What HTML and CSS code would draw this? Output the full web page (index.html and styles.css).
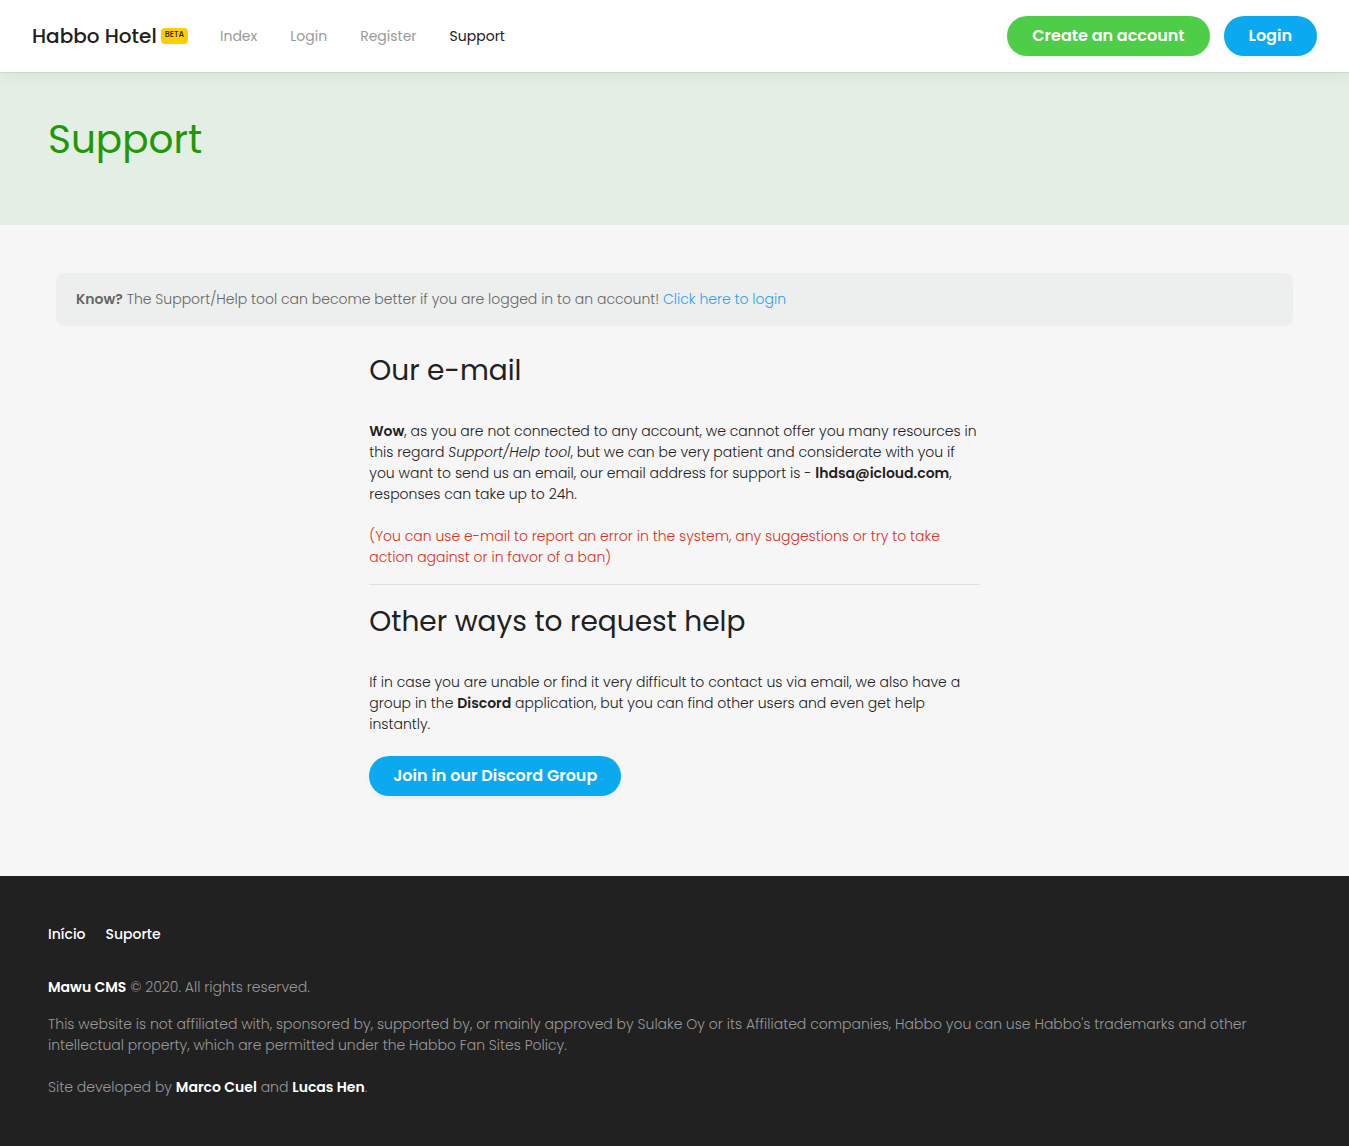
FILE: index.html
```html
<!DOCTYPE html>
<html lang="en">
<head>
<meta charset="utf-8">
<meta name="viewport" content="width=device-width, initial-scale=1">
<title>Support - Habbo Hotel</title>
<link rel="stylesheet" href="styles.css">
</head>
<body>
<header class="navbar">
  <a class="brand" href="#">Habbo Hotel <span class="badge">BETA</span></a>
  <nav class="nav">
    <a href="#">Index</a>
    <a href="#">Login</a>
    <a href="#">Register</a>
    <a class="active" href="#" aria-current="page">Support</a>
  </nav>
  <div class="actions">
    <button class="btn btn-green" type="button">Create an account</button>
    <button class="btn btn-blue" type="button">Login</button>
  </div>
</header>
<section class="hero">
  <h1>Support</h1>
</section>
<main class="content">
  <div class="alert"><strong>Know?</strong> The Support/Help tool can become better if you are logged in to an account! <a href="#">Click here to login</a></div>
  <article class="article">
    <h2>Our e-mail</h2>
    <p><strong>Wow</strong>, as you are not connected to any account, we cannot offer you many resources in this regard <em>Support/Help tool</em>, but we can be very patient and considerate with you if you want to send us an email, our email address for support is - <strong>lhdsa@icloud.com</strong>, responses can take up to 24h.</p>
    <p class="warning">(You can use e-mail to report an error in the system, any suggestions or try to take action against or in favor of a ban)</p>
    <hr>
    <h2>Other ways to request help</h2>
    <p>If in case you are unable or find it very difficult to contact us via email, we also have a group in the <strong>Discord</strong> application, but you can find other users and even get help instantly.</p>
    <button class="btn btn-blue" type="button">Join in our Discord Group</button>
  </article>
</main>
<footer class="footer">
  <nav class="footer-nav">
    <a href="#">Início</a>
    <a href="#">Suporte</a>
  </nav>
  <p class="copyright"><strong>Mawu CMS</strong> © 2020. All rights reserved.</p>
  <p class="legal">This website is not affiliated with, sponsored by, supported by, or mainly approved by Sulake Oy or its Affiliated companies, Habbo you can use Habbo's trademarks and other intellectual property, which are permitted under the Habbo Fan Sites Policy.</p>
  <p>Site developed by <strong>Marco Cuel</strong> and <strong>Lucas Hen</strong>.</p>
</footer>
</body>
</html>
```

FILE: styles.css
```css
* {
  box-sizing: border-box;
}

body {
  display: flex;
  flex-direction: column;
  min-height: 100vh;
  margin: 0;
  background: #f6f6f6;
  color: #212121;
  font-family: Poppins, Inter, sans-serif;
  font-size: 14px;
  font-weight: 300;
  line-height: 21px;
}

h1, h2, p {
  margin: 0;
}

h1, h2 {
  font-weight: 400;
}

a {
  text-decoration: none;
}

strong {
  font-weight: 600;
}

.navbar {
  position: relative;
  display: flex;
  align-items: center;
  padding: 16px 32px;
  background: #fff;
  box-shadow: 0 0 1px rgba(0, 0, 0, .4), 0 4px 16px rgba(0, 0, 0, .05);
}

.brand {
  display: flex;
  align-items: center;
  gap: 4px;
  margin-right: 32px;
  color: #212121;
  font-size: 20px;
  font-weight: 500;
}

.badge {
  padding: 0 4px 2px;
  border-radius: 4px;
  background: #ffcd00;
  font-size: 8px;
  font-weight: 500;
  line-height: 14px;
}

.nav {
  display: flex;
  gap: 33px;
  font-weight: 400;
}

.nav a {
  color: #9a9a9a;
}

.nav .active {
  color: #212121;
}

.actions {
  display: flex;
  gap: 14px;
  margin-left: auto;
}

.btn {
  height: 40px;
  padding: 0 24px 2px;
  border: 0;
  border-radius: 20px;
  color: #fff;
  font-family: inherit;
  font-size: 16px;
  font-weight: 600;
  box-shadow: 0 2px 4px rgba(0, 0, 0, .05);
  cursor: pointer;
}

.actions .btn {
  padding: 0 25px 2px;
}

.btn-green {
  background: #4dcd48;
}

.btn-blue {
  background: #0ba9ef;
}

.hero {
  padding: 44px 48px 61px;
  background: #e3eee4;
}

.hero h1 {
  color: #219806;
  font-size: 39px;
  line-height: 48px;
}

.content {
  flex: 1;
  padding: 48px 48px 80px;
}

.alert {
  margin: 0 8px;
  padding: 16px 20px;
  border-radius: 8px;
  background: #edefee;
  color: #666;
}

.alert a {
  color: #2c9ff0;
}

.article {
  width: 50%;
  margin: 28px auto 0;
  padding: 0 8px;
}

.article h2 {
  margin-bottom: 33px;
  font-size: 28px;
  line-height: 34px;
}

.article p {
  margin-bottom: 21px;
}

.article .warning {
  margin-bottom: 16px;
  color: #dc3020;
}

.article hr {
  margin: 0 0 20px;
  border: 0;
  border-top: 1px solid #e0e0e0;
}

.footer {
  padding: 48px;
  background: #212121;
  color: #999;
}

.footer a,
.footer strong {
  color: #fff;
}

.footer-nav {
  display: flex;
  gap: 20px;
  margin-bottom: 32px;
  font-weight: 500;
}

.copyright {
  margin-bottom: 16px;
}

.legal {
  margin-bottom: 21px;
}
```
